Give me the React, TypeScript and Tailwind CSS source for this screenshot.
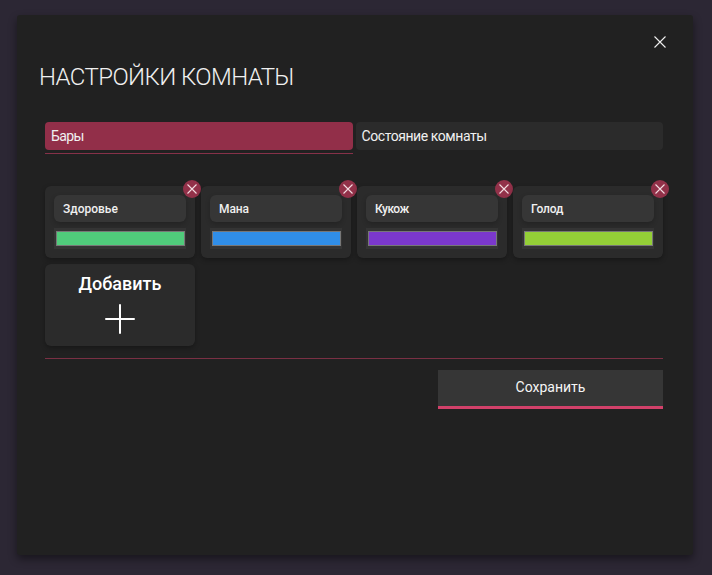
const bars = [
  { name: 'Здоровье', color: '#50cb7b', spacing: 'tracking-[0px]' },
  { name: 'Мана', color: '#308ee8', spacing: 'tracking-[-0.1px]' },
  { name: 'Кукож', color: '#7b38cc', spacing: 'tracking-[-0.5px]' },
  { name: 'Голод', color: '#94cf37', spacing: 'tracking-[-0.15px]' },
];

function Cross({ size, width = 1 }: { size: number; width?: number }) {
  return (
    <svg width={size} height={size} viewBox={`0 0 ${size} ${size}`} fill="none" stroke="currentColor" strokeWidth={width}>
      <path d={`M.5.5 ${size - 0.5} ${size - 0.5}M${size - 0.5}.5.5 ${size - 0.5}`} />
    </svg>
  );
}

function BarCard({ name, color, spacing }: (typeof bars)[number]) {
  return (
    <div className="relative h-[72px] rounded-md bg-[#2b2b2b] px-[9px] pt-[9px] shadow-[0_2px_5px_rgba(0,0,0,0.3)]">
      <div className={`flex h-[27px] items-center rounded-md bg-[#363636] pl-[9px] text-[12px] font-medium text-[#f0f0f0] shadow-[0_2px_5px_rgba(0,0,0,0.2)] ${spacing}`}>
        {name}
      </div>
      <div className="mt-1.5 h-[21px] bg-[#343434] py-[3px] pr-px pl-0.5">
        <div className="h-[15px] border border-[#777777]" style={{ backgroundColor: color }} />
      </div>
      <button className="absolute -top-1.5 -right-1.5 flex size-[18px] items-center justify-center rounded-full bg-[#923149] text-[#f3dce1]">
        <Cross size={10} width={1.1} />
      </button>
    </div>
  );
}

export default function App() {
  return (
    <div className="h-[575px] w-[712px] overflow-hidden bg-[#2c2734] pt-[15px] pl-[17px] font-['Roboto','Noto_Sans',sans-serif] text-[#f0f0f0]">
      <main className="h-[540px] w-[676px] rounded-[3px] bg-[#212121] shadow-[0_4px_8px_rgba(0,0,0,0.45)]">
        <div className="flex h-[43px] items-end justify-end pt-[21px] pr-[27px] pb-[10px]">
          <button><Cross size={12} width={1.1} /></button>
        </div>
        <h1 className="flex h-[38px] items-center pl-[22px] text-[24px] font-light tracking-[-0.6px] whitespace-nowrap">НАСТРОЙКИ КОМНАТЫ</h1>
        <div className="w-[646px] pt-[26px] pl-7">
          <nav className="grid h-8 grid-cols-[308px_307px] gap-[3px] text-[14px] tracking-[-0.43px]">
            <div className="flex flex-col justify-between">
              <div className="flex h-7 items-center rounded bg-[#922f49] pl-1.5 tracking-[-0.6px]">Бары</div>
              <div className="h-px bg-[#863149]" />
            </div>
            <div className="flex h-7 items-center rounded bg-[#2b2b2b] pl-[5.5px]">Состояние комнаты</div>
          </nav>
          <section className="mt-8 grid grid-cols-[repeat(4,150px)] gap-1.5">
            {bars.map((bar) => <BarCard key={bar.name} {...bar} />)}
            <button className="flex h-[82px] flex-col items-center rounded-md bg-[#2b2b2b] pt-2 text-[18px] leading-6 font-medium text-white shadow-[0_2px_5px_rgba(0,0,0,0.3)]">
              Добавить
              <svg className="mt-2" width="30" height="30" viewBox="0 0 30 30" stroke="white" strokeWidth="2" strokeLinecap="round">
                <path d="M15 1v28M1 15h28" />
              </svg>
            </button>
          </section>
          <div className="mt-3 h-px w-[618px] bg-[#7a3044]" />
          <div className="flex w-[618px] justify-end pt-[11px]">
            <button className="h-[39px] w-[225px] border-b-[3px] border-[#d2416a] bg-[#363636] pb-0.5 text-[14px] font-normal text-[#f5f5f5]">Сохранить</button>
          </div>
        </div>
      </main>
    </div>
  );
}
